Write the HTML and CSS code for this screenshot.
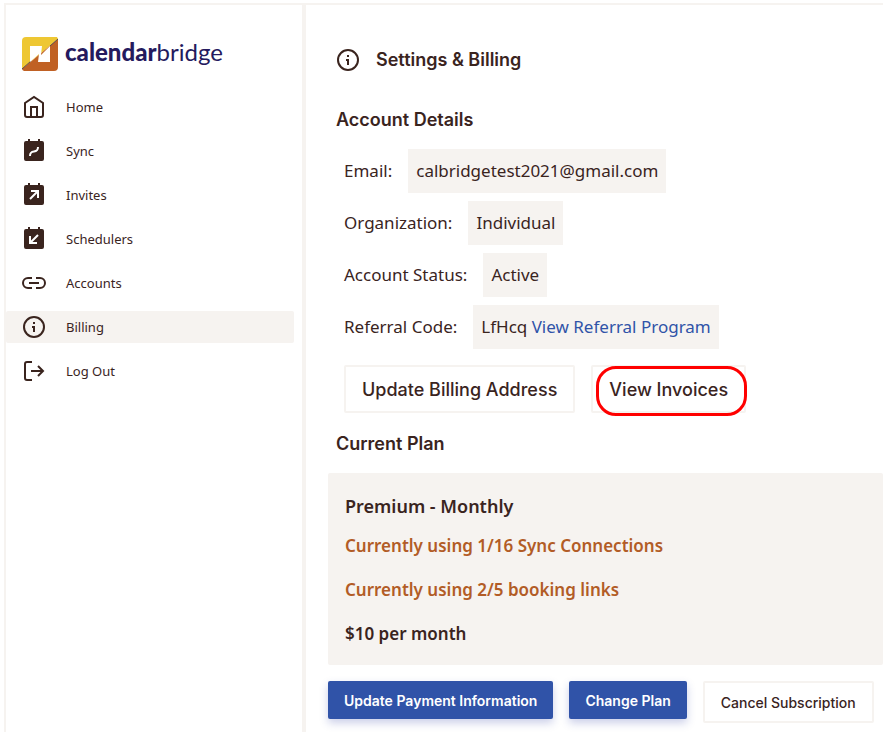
FILE: index.html
```html
<!DOCTYPE html>
<html lang="en">
<head>
    <meta charset="UTF-8">
    <meta name="viewport" content="width=device-width, initial-scale=1.0">
    <title>CalendarBridge - Settings &amp; Billing</title>
    <link rel="stylesheet" href="styles.css">
</head>
<body>
    <div class="layout">
        <aside class="sidebar">
            <a class="logo" href="#">
                <svg width="36" height="34" viewBox="0 0 36 34">
                    <path fill="#eec733" d="M4 0H35L36 2L0 32V4a4 4 0 0 1 4-4z"/>
                    <path fill="#c06124" d="M36 2V30a4 4 0 0 1-4 4H3a3 3 0 0 1-3-2z"/>
                    <path stroke="#5b4a4a" d="M36 2L28 9M9 24L0 32"/>
                    <path fill="#fff" d="M8 9H20L19 18L28 9V25H16L17 17L8 25z"/>
                </svg>
                <span class="logo-text"><b>calendar</b>bridge</span>
            </a>
            <nav class="menu">
                <a href="#">
                    <svg class="icon" viewBox="0 0 24 24"><path d="M3 8l9-6 9 6v12a2 2 0 0 1-2 2H5a2 2 0 0 1-2-2zM9 22V12h6v10"/></svg>
                    Home
                </a>
                <a href="#">
                    <svg class="icon solid" viewBox="0 0 24 24"><path class="body" d="M6 0h2v2h8V0h2v2h2a2 2 0 0 1 2 2v16a2 2 0 0 1-2 2H4a2 2 0 0 1-2-2V4a2 2 0 0 1 2-2h2z"/><path d="M8 17c0-8 8-1 8-9"/></svg>
                    Sync
                </a>
                <a href="#">
                    <svg class="icon solid" viewBox="0 0 24 24"><path class="body" d="M6 0h2v2h8V0h2v2h2a2 2 0 0 1 2 2v16a2 2 0 0 1-2 2H4a2 2 0 0 1-2-2V4a2 2 0 0 1 2-2h2z"/><path d="M8 16l8-8M9 8h7v7"/></svg>
                    Invites
                </a>
                <a href="#">
                    <svg class="icon solid" viewBox="0 0 24 24"><path class="body" d="M6 0h2v2h8V0h2v2h2a2 2 0 0 1 2 2v16a2 2 0 0 1-2 2H4a2 2 0 0 1-2-2V4a2 2 0 0 1 2-2h2z"/><path d="M16 8l-8 8M8 9v7h7"/></svg>
                    Schedulers
                </a>
                <a href="#">
                    <svg class="icon" viewBox="0 0 24 24"><path d="M10 7H6a5 5 0 0 0 0 10h4M14 7h4a5 5 0 0 1 0 10h-4M7 12h10"/></svg>
                    Accounts
                </a>
                <a class="active" href="#">
                    <svg class="icon" viewBox="0 0 24 24"><circle cx="12" cy="12" r="10"/><path d="M12 7v2M10 12h2v5"/></svg>
                    Billing
                </a>
                <a href="#">
                    <svg class="icon" viewBox="0 0 24 24"><path d="M10 3H5a2 2 0 0 0-2 2v14a2 2 0 0 0 2 2h5M9 12h12M16 7l5 5-5 5"/></svg>
                    Log Out
                </a>
            </nav>
        </aside>

        <main class="content">
            <h1>
                <svg class="icon" viewBox="0 0 24 24"><circle cx="12" cy="12" r="10"/><path d="M12 7v2M10 12h2v5"/></svg>
                Settings &amp; Billing
            </h1>

            <h2>Account Details</h2>
            <dl class="details">
                <div><dt>Email:</dt><dd>calbridgetest2021@gmail.com</dd></div>
                <div><dt>Organization:</dt><dd>Individual</dd></div>
                <div><dt>Account Status:</dt><dd>Active</dd></div>
                <div><dt>Referral Code:</dt><dd>LfHcq <a href="#">View Referral Program</a></dd></div>
            </dl>
            <div class="account-actions">
                <button class="btn-outline" type="button">Update Billing Address</button>
                <button class="btn-outline marked" type="button">View Invoices</button>
            </div>

            <h2>Current Plan</h2>
            <section class="plan">
                <h3>Premium - Monthly</h3>
                <p class="usage">Currently using 1/16 Sync Connections</p>
                <p class="usage">Currently using 2/5 booking links</p>
                <p>$10 per month</p>
            </section>
            <div class="plan-actions">
                <button class="btn-primary" type="button">Update Payment Information</button>
                <button class="btn-primary" type="button">Change Plan</button>
                <button class="btn-outline small" type="button">Cancel Subscription</button>
            </div>
        </main>
    </div>
</body>
</html>
```
FILE: styles.css
```css
:root { --fg: #3a241e; --bg2: #f6f3f0; --blue: #3053a8; --orange: #b25c26; --navy: #241a5e; }

* {
    box-sizing: border-box;
    margin: 0;
    padding: 0;
}

body {
    color: var(--fg);
    background: #fff;
    font-family: "Noto Sans", sans-serif;
    padding: 3px 0 0 4px;
}

a {
    color: var(--blue);
    text-decoration: none;
}

.layout {
    display: flex;
    min-height: calc(100vh - 3px);
    border-top: 2px solid var(--bg2);
    border-left: 2px solid var(--bg2);
}

.sidebar {
    flex: 0 0 300px;
    padding: 32px 8px 0 0;
    border-right: 4px solid var(--bg2);
}

.logo {
    display: flex;
    align-items: center;
    gap: 7px;
    height: 34px;
    padding-left: 16px;
    margin-bottom: 20px;
}

.logo-text {
    font-family: Lato, sans-serif;
    font-size: 24px;
    line-height: 28px;
    padding-bottom: 4px;
    color: var(--navy);
}

.logo-text b {
    font-weight: 900;
}

.menu {
    display: flex;
    flex-direction: column;
    gap: 12px;
}

.menu a {
    display: flex;
    align-items: center;
    gap: 20px;
    height: 32px;
    padding-left: 16px;
    border-radius: 2px;
    font-size: 13px;
    color: var(--fg);
}

.menu a.active {
    background: var(--bg2);
}

.icon {
    width: 24px;
    height: 24px;
    fill: none;
    stroke: var(--fg);
    stroke-width: 2;
}

.icon.solid {
    stroke: #fff;
}

.icon .body {
    fill: var(--fg);
    stroke: none;
}

.content {
    flex: 1;
    min-width: 0;
    padding: 40px 0 8px 22px;
}

h1, h2, h3 {
    font-weight: 600;
}

h1, h2 {
    font-family: Inter, sans-serif;
    font-size: 18px;
    line-height: 30px;
    padding-left: 8px;
}

h1 {
    display: flex;
    align-items: center;
    gap: 16px;
    margin-bottom: 30px;
}

.details {
    display: flex;
    flex-direction: column;
    gap: 8px;
    padding: 14px 16px 16px;
}

.details div {
    display: flex;
    gap: 16px;
    font-size: 17px;
    line-height: 44px;
}

.details dd {
    padding: 0 8px;
    background: var(--bg2);
}

.account-actions {
    display: flex;
    gap: 16px;
    padding-left: 16px;
    margin-bottom: 16px;
}

button {
    font-family: Inter, sans-serif;
    border: none;
    border-radius: 2px;
    cursor: pointer;
}

.btn-outline {
    position: relative;
    height: 48px;
    padding: 0 16px;
    border: 2px solid var(--bg2);
    background: #fff;
    color: var(--fg);
    font-size: 18px;
    font-weight: 500;
}

.btn-outline.small {
    height: 42px;
    font-size: 14px;
}

/* red ring around the invoices button */
.marked::after {
    content: "";
    position: absolute;
    top: -1px;
    right: -3px;
    bottom: -5px;
    left: 3px;
    border: 3px solid #f00;
    border-radius: 20px;
}

.plan {
    margin-top: 14px;
    padding: 17px 17px 9px;
    border-radius: 2px;
    background: var(--bg2);
    font-size: 17px;
    font-weight: 600;
}

.plan h3 {
    font-size: 18px;
    line-height: 32px;
    margin-bottom: 2px;
}

.plan p {
    line-height: 44px;
}

.plan .usage {
    color: var(--orange);
}

.plan-actions {
    display: flex;
    align-items: flex-start;
    gap: 16px;
    margin-top: 16px;
}

.btn-primary {
    height: 38px;
    padding: 0 16px;
    background: var(--blue);
    color: #fff;
    font-size: 14px;
    font-weight: 600;
    box-shadow: 0 4px 8px rgba(48, 63, 168, 0.25);
}
```
